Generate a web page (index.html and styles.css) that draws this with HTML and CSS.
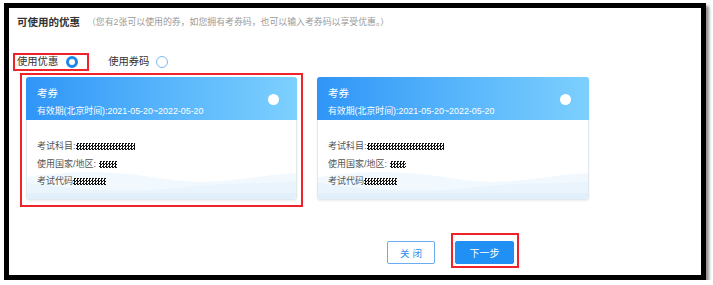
FILE: index.html
```html
<!DOCTYPE html>
<html lang="zh">
<head>
<meta charset="utf-8">
<link rel="stylesheet" href="styles.css">
</head>
<body>
<div class="frame">
  <div class="head">
    <span class="title">可使用的优惠</span><span class="hint">（您有2张可以使用的券，如您拥有考券码，也可以输入考券码以享受优惠。）</span>
  </div>
  <div class="opts">
    <label class="opt opt-active"><span>使用优惠</span><span class="radio radio-on"></span></label>
    <label class="opt"><span>使用券码</span><span class="radio"></span></label>
  </div>
  <div class="cards">
    <div class="card card-picked">
      <div class="card-head">
        <div class="card-info">
          <div class="card-name">考券</div>
          <div class="card-date">有效期(北京时间):2021-05-20~2022-05-20</div>
        </div>
        <span class="card-radio"></span>
      </div>
      <div class="card-body">
        <div class="line">考试科目:<span class="mask" style="width:59px"></span></div>
        <div class="line">使用国家/地区: <span class="mask gap" style="width:18px"></span></div>
        <div class="line">考试代码<span class="mask" style="width:33px"></span></div>
      </div>
      <svg class="wave" viewBox="0 0 272 30" preserveAspectRatio="none">
        <path d="M0 8 C50 0 90 2 140 10 C190 18 230 6 272 4 L272 30 L0 30 Z" fill="#f2f9fe"/>
        <path d="M0 14 C60 22 110 24 160 18 C210 12 240 16 272 12 L272 30 L0 30 Z" fill="#e9f4fd"/>
        <path d="M0 24 L272 24 L272 30 L0 30 Z" fill="#e2f0fc"/>
      </svg>
    </div>
    <div class="card">
      <div class="card-head">
        <div class="card-info">
          <div class="card-name">考券</div>
          <div class="card-date">有效期(北京时间):2021-05-20~2022-05-20</div>
        </div>
        <span class="card-radio"></span>
      </div>
      <div class="card-body">
        <div class="line">考试科目:<span class="mask" style="width:77px"></span></div>
        <div class="line">使用国家/地区: <span class="mask gap" style="width:16px"></span></div>
        <div class="line">考试代码<span class="mask" style="width:33px"></span></div>
      </div>
      <svg class="wave" viewBox="0 0 272 30" preserveAspectRatio="none">
        <path d="M0 8 C50 0 90 2 140 10 C190 18 230 6 272 4 L272 30 L0 30 Z" fill="#f2f9fe"/>
        <path d="M0 14 C60 22 110 24 160 18 C210 12 240 16 272 12 L272 30 L0 30 Z" fill="#e9f4fd"/>
        <path d="M0 24 L272 24 L272 30 L0 30 Z" fill="#e2f0fc"/>
      </svg>
    </div>
  </div>
  <div class="actions">
    <button class="btn btn-ghost">关闭</button>
    <button class="btn btn-primary btn-marked">下一步</button>
  </div>
</div>
</body>
</html>
```
FILE: styles.css
```css
html, body {
  margin: 0;
  padding: 0;
  background: #fff;
}
body {
  font-family: "Liberation Sans", "Noto Sans CJK SC", sans-serif;
  color: #333;
}
.frame {
  box-sizing: border-box;
  margin: 3px 0 0 4px;
  width: 702px;
  height: 277px;
  border: 5px solid #000;
  background: #fff;
  box-shadow: 3px 3px 3px rgba(0, 0, 0, 0.45);
}
.head {
  padding: 8px 0 0 8px;
  height: 12px;
  display: flex;
  align-items: center;
  white-space: nowrap;
}
.title {
  font-size: 10.5px;
  font-weight: bold;
  color: #333;
  line-height: 12px;
}
.hint {
  font-size: 8.9px;
  color: #9a9a9a;
  margin-left: 7px;
  line-height: 12px;
}
.opts {
  margin-top: 25px;
  padding-left: 4px;
  display: flex;
  align-items: center;
  height: 18px;
}
.opt {
  display: flex;
  align-items: center;
  font-size: 10.3px;
  color: #333;
  height: 14px;
  line-height: 14px;
  border: 2px solid transparent;
  padding: 0 9px 0 2px;
}
.opt + .opt {
  margin-left: 15px;
}
.opt-active {
  border-color: #f0232a;
}
.radio {
  box-sizing: border-box;
  width: 12px;
  height: 12px;
  border-radius: 50%;
  border: 1px solid #7bb9f1;
  background: #fff;
  margin-left: 7px;
}
.radio-on {
  border: 3.5px solid #1f87e8;
  margin-left: 8px;
}
.cards {
  margin-top: 6px;
  padding-left: 17px;
  display: flex;
  gap: 20px;
}
.card {
  position: relative;
  box-sizing: border-box;
  width: 271px;
  height: 123px;
  border: 1px solid #e2e8ef;
  border-radius: 3px;
  box-shadow: 0 1px 2px rgba(0, 0, 0, 0.08);
  background: #fff;
}
.card + .card {
  width: 272px;
}
.card-picked::after {
  content: "";
  position: absolute;
  left: -7px;
  top: -5px;
  right: -7px;
  bottom: -8px;
  border: 2px solid #f0232a;
  pointer-events: none;
}
.card-head {
  height: 43px;
  margin: -1px -1px 0 -1px;
  border-radius: 3px 3px 0 0;
  background: linear-gradient(90deg, #2f95f7 0%, #56b4fb 50%, #7dd0fe 100%);
  display: flex;
  align-items: flex-start;
  justify-content: space-between;
  padding: 0 18px 0 11px;
  color: #fff;
}
.card-info {
  padding-top: 9px;
}
.card-name {
  font-size: 10.5px;
  line-height: 14px;
}
.card-date {
  font-size: 8.9px;
  line-height: 12px;
  margin-top: 5px;
  white-space: nowrap;
}
.card-radio {
  width: 11px;
  height: 11px;
  border-radius: 50%;
  background: #fff;
  margin-top: 17px;
}
.card-body {
  position: relative;
  z-index: 1;
  padding: 18px 0 0 10px;
}
.line {
  font-size: 9px;
  line-height: 17.5px;
  height: 17.5px;
  color: #555;
  display: flex;
  align-items: center;
  white-space: nowrap;
}
.mask {
  display: inline-block;
  height: 7px;
  background: repeating-conic-gradient(#111 0 25%, #fff 0 50%) 0 0 / 3px 3px;
}
.mask.gap {
  margin-left: 3px;
}
.wave {
  position: absolute;
  left: 0;
  right: 0;
  bottom: 0;
  width: 100%;
  height: 30px;
  display: block;
  border-radius: 0 0 3px 3px;
}
.actions {
  margin-top: 41px;
  padding-left: 378px;
  display: flex;
  gap: 20px;
}
.btn {
  box-sizing: border-box;
  height: 23px;
  border-radius: 2px;
  font-family: "Noto Sans CJK SC", sans-serif;
  cursor: pointer;
  padding: 0;
}
.btn-ghost {
  width: 48px;
  background: #fff;
  border: 1px solid #69adf0;
  color: #2b8ff0;
  font-size: 9.5px;
  letter-spacing: 3px;
  text-indent: 3px;
}
.btn-primary {
  width: 59px;
  background: #2190f4;
  border: 1px solid #2190f4;
  color: #fff;
  font-size: 10px;
}
.btn-marked {
  position: relative;
}
.btn-marked::after {
  content: "";
  position: absolute;
  left: -5px;
  top: -9px;
  right: -6px;
  bottom: -5px;
  border: 2px solid #f0232a;
  pointer-events: none;
}
```
